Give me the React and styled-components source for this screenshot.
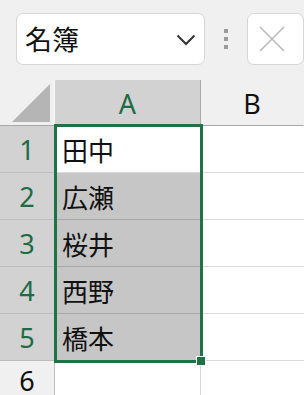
import React from 'react'
import styled, { createGlobalStyle } from 'styled-components'

const Global = createGlobalStyle`
  html, body { margin: 0; padding: 0; background: #f0f0f0; }
  body { font-family: "Noto Sans", "Noto Sans CJK JP", sans-serif; }
`

const names = ['田中', '広瀬', '桜井', '西野', '橋本']

export default function App() {
  return (
    <>
      <Global />
      <Page>
        <Toolbar>
          <NameBox>
            <span>名簿</span>
            <svg width="20" height="12" viewBox="0 0 20 12">
              <path d="M1.5 1.5 L10 10 L18.5 1.5" fill="none" stroke="#333" strokeWidth="2" />
            </svg>
          </NameBox>
          <Dots>
            <i /><i /><i />
          </Dots>
          <CancelBox>
            <svg width="26" height="26" viewBox="0 0 26 26">
              <path d="M1 1 L25 25 M25 1 L1 25" stroke="#b9b9b9" strokeWidth="1.6" fill="none" />
            </svg>
          </CancelBox>
        </Toolbar>
        <Sheet>
          <Corner>
            <svg width="40" height="40" viewBox="0 0 40 40">
              <polygon points="0,39 38,1 38,39" fill="#b5b5b5" />
            </svg>
          </Corner>
          <ColHead $active>A</ColHead>
          <ColHead>B</ColHead>
          {names.map((n, i) => (
            <React.Fragment key={n}>
              <RowHead $active>{i + 1}</RowHead>
              <Cell $sel={i > 0} $inA>{n}</Cell>
              <Cell />
            </React.Fragment>
          ))}
          <RowHead>6</RowHead>
          <Cell $inA />
          <Cell />
          <Selection>
            <Handle />
          </Selection>
        </Sheet>
      </Page>
    </>
  )
}

const Page = styled.div`
  width: 304px;
  height: 395px;
  overflow: hidden;
  background: #f0f0f0;
`

const Toolbar = styled.div`
  height: 80px;
  box-sizing: border-box;
  padding: 13px 0 0 16px;
  display: flex;
  align-items: flex-start;
`

const NameBox = styled.div`
  width: 201px;
  height: 52px;
  box-sizing: border-box;
  border: 1px solid #d6d6d6;
  border-radius: 7px;
  background: #fff;
  display: flex;
  align-items: center;
  justify-content: space-between;
  padding: 0 8px 0 8px;
  span {
    font-family: "Noto Sans CJK JP", sans-serif;
    font-size: 27px;
    color: #111;
    line-height: 1;
    margin-top: -2px;
  }
  svg { margin-top: 2px; }
`

const Dots = styled.div`
  width: 4px;
  margin: 16px 0 0 19px;
  display: flex;
  flex-direction: column;
  gap: 4px;
  i {
    display: block;
    width: 4px;
    height: 4px;
    background: #9a9a9a;
  }
`

const CancelBox = styled.div`
  margin-left: 19px;
  width: 60px;
  height: 52px;
  box-sizing: border-box;
  border: 1px solid #d6d6d6;
  border-radius: 7px;
  background: #fff;
  display: flex;
  align-items: center;
  padding-left: 11px;
`

const Sheet = styled.div`
  position: relative;
  display: grid;
  grid-template-columns: 55px 146px 1fr;
  grid-template-rows: 46px repeat(5, 47px) 40px;
  background: #fff;
  font-family: "Noto Sans", sans-serif;
`

const Corner = styled.div`
  background: #f0f0f0;
  border-right: 1px solid #f8f8f8;
  border-bottom: 1px solid #a8a8a8;
  display: flex;
  align-items: flex-end;
  justify-content: flex-end;
  padding: 0 2px 2px 0;
`

const ColHead = styled.div`
  background: ${p => (p.$active ? '#d2d2d2' : '#f0f0f0')};
  color: ${p => (p.$active ? '#1e6b45' : '#111')};
  border-right: 1px solid ${p => (p.$active ? '#a8a8a8' : 'transparent')};
  border-bottom: 1px solid #a8a8a8;
  font-size: 27px;
  display: flex;
  align-items: center;
  justify-content: center;
  padding-top: 2px;
`

const RowHead = styled.div`
  background: ${p => (p.$active ? '#d2d2d2' : '#f0f0f0')};
  color: ${p => (p.$active ? '#1e6b45' : '#111')};
  border-bottom: 1px solid #bdbdbd;
  border-right: 1px solid #bdbdbd;
  font-size: 27px;
  display: flex;
  align-items: center;
  justify-content: center;
`

const Cell = styled.div`
  background: ${p => (p.$sel ? '#c6c6c6' : '#fff')};
  border-bottom: 1px solid ${p => (p.$sel ? '#a9a9a9' : '#dadada')};
  border-right: ${p => (p.$inA ? '1px solid #d6d6d6' : 'none')};
  font-family: "Noto Sans CJK JP", sans-serif;
  font-size: 26px;
  color: #111;
  display: flex;
  align-items: center;
  padding-left: 7px;
`

const Selection = styled.div`
  position: absolute;
  left: 54px;
  top: 44px;
  width: 149px;
  height: 239px;
  box-sizing: border-box;
  border: 3px solid #1f7244;
  pointer-events: none;
`

const Handle = styled.div`
  position: absolute;
  right: -6px;
  bottom: -6px;
  width: 8px;
  height: 8px;
  background: #1f7244;
  border: 1px solid #fff;
`
